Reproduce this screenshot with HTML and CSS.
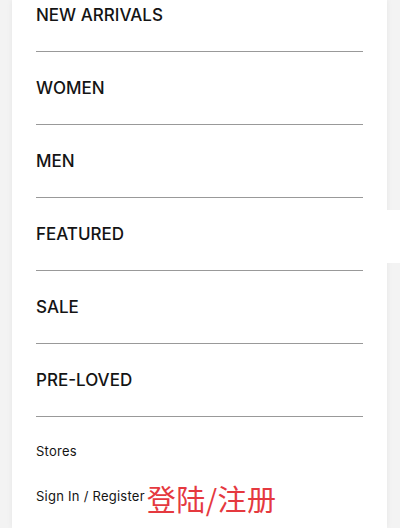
FILE: index.html
```html
<!DOCTYPE html>
<html lang="en">
<head>
<meta charset="utf-8">
<link rel="stylesheet" href="styles.css">
</head>
<body>
<div class="page">
  <nav class="panel">
    <ul class="menu">
      <li class="menu-item">NEW ARRIVALS</li>
      <li class="menu-item">WOMEN</li>
      <li class="menu-item">MEN</li>
      <li class="menu-item">FEATURED</li>
      <li class="menu-item">SALE</li>
      <li class="menu-item">PRE-LOVED</li>
    </ul>
    <ul class="links">
      <li class="link">Stores</li>
      <li class="link">Sign In / Register <span class="note">登陆/注册</span></li>
    </ul>
  </nav>
  <div class="edge-gap"></div>
</div>
</body>
</html>
```
FILE: styles.css
```css
html, body {
  margin: 0;
  padding: 0;
  height: 100%;
  overflow: hidden;
}
body {
  background: #f3f3f3;
  font-family: "Inter", "Liberation Sans", sans-serif;
  color: #141414;
}
.page {
  position: relative;
  height: 100%;
}
.panel {
  display: flow-root;
  box-sizing: border-box;
  margin: 0 13px 0 12px;
  background: #fff;
  height: 100%;
  padding: 0 24px;
  box-shadow: 0 0 6px rgba(0, 0, 0, 0.06);
}
.menu, .links {
  list-style: none;
  margin: 0;
  padding: 0;
}
.menu {
  margin-top: -21px;
}
.menu-item {
  font-size: 17px;
  font-weight: 500;
  line-height: 20px;
  letter-spacing: 0;
  padding: 26px 0;
  border-bottom: 1px solid #999;
}
.links {
  padding-top: 25px;
  display: flex;
  flex-direction: column;
  gap: 27px;
}
.link {
  font-size: 13px;
  line-height: 18px;
  letter-spacing: 0.25px;
}
.note {
  font-family: "Noto Sans CJK SC", sans-serif;
  font-size: 29px;
  line-height: 18px;
  letter-spacing: 0.5px;
  color: #e5393f;
  vertical-align: -10px;
  margin-left: -2px;
}
.edge-gap {
  position: absolute;
  right: 0;
  top: 210px;
  width: 13px;
  height: 53px;
  background: #fff;
}
```
